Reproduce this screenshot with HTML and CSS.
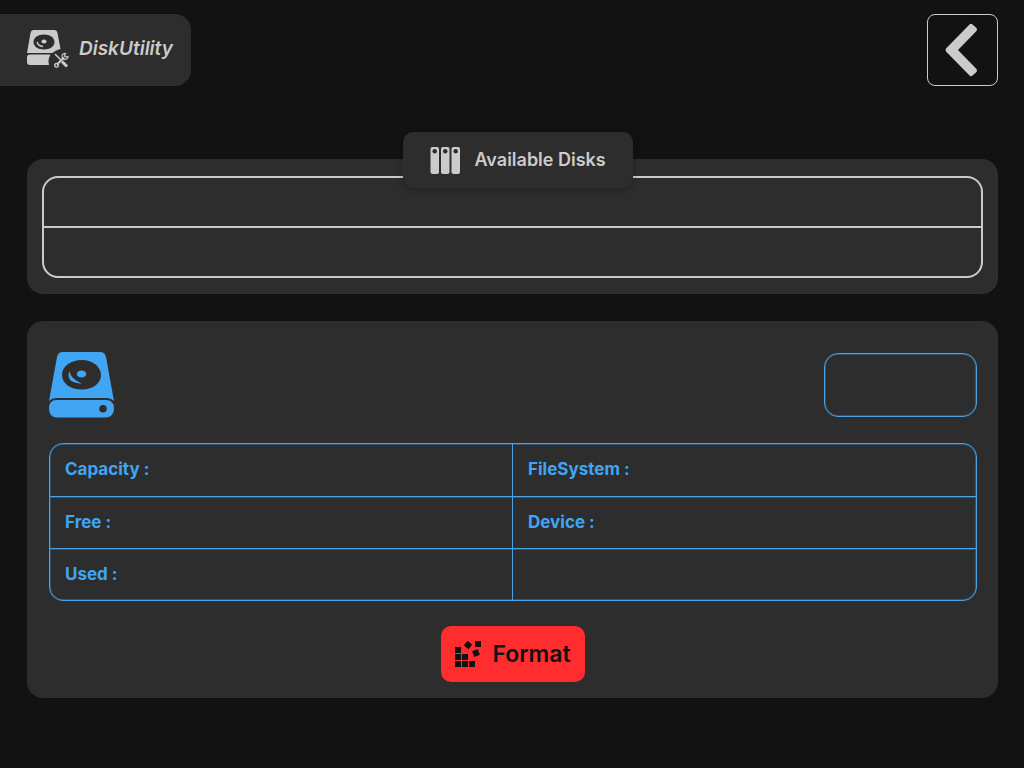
FILE: index.html
```html
<!DOCTYPE html>
<html lang="en">
<head>
<meta charset="utf-8">
<meta name="viewport" content="width=device-width, initial-scale=1">
<title>DiskUtility</title>
<link rel="stylesheet" href="styles.css">
</head>
<body>
<header class="topbar">
  <div class="brand">
    <svg class="brand-icon" viewBox="0 0 43 41" aria-hidden="true">
      <path fill="currentColor" fill-rule="evenodd" d="M8 1h20q3 0 3.500 3l3 16q-5 1-8 4H1L4.500 4Q5 1 8 1zM18 5.500c-6 0-10.500 3-10.500 7.500S12 20.500 18 20.500s10.500-3 10.500-7.500S24 5.500 18 5.500z"/>
      <ellipse cx="18" cy="12.600" rx="2.600" ry="2" fill="currentColor"/>
      <path d="M11 13q1 4 6 4.500" fill="none" stroke="currentColor" stroke-width="1.300"/>
      <path fill="currentColor" d="M4 25.500h20.500q-3 5-1.500 10.500H4q-3 0-3-3v-4.500q0-3 3-3z"/>
      <g fill="none" stroke="currentColor">
        <path d="M29 25l6 6" stroke-width="1.500"/>
        <path d="M36 32.500l5 5" stroke-width="3"/>
        <path d="M31 35.500l7-7" stroke-width="2"/>
        <path d="M39.500 24.500a3 3 0 1 0 2.500 3l-2.500.700-1-1z" stroke-width="1.200"/>
        <circle cx="30.500" cy="36.300" r="1.800" stroke-width="1.400"/>
      </g>
    </svg>
    <h1 class="brand-name">DiskUtility</h1>
  </div>
  <button class="back" type="button" aria-label="Back">
    <svg class="back-icon" viewBox="0 0 34 54" aria-hidden="true">
      <path fill="currentColor" d="M24.500 1.500q1.500-1.500 3 0l4 3.500q1 1.500 0 3L13 27l18.500 19q1 1.500 0 3l-4 3.500q-1.500 1.500-3 0L1 28.500q-1-1.500 0-3z"/>
    </svg>
  </button>
</header>
<main class="content">
  <section class="panel disks">
    <h2 class="disks-title">
      <svg class="disks-icon" viewBox="0 0 30 28" aria-hidden="true">
        <g fill="currentColor"><rect x="0.500" y="1" width="8.500" height="27" rx="2"/><rect x="11" y="1" width="8.500" height="27" rx="2"/><rect x="21.500" y="1" width="8.500" height="27" rx="2"/></g>
        <g fill="#2d2d2d"><circle cx="4.700" cy="5.200" r="2.200"/><circle cx="15.200" cy="5.200" r="2.200"/><circle cx="25.700" cy="5.200" r="2.200"/></g>
      </svg>
      Available Disks
    </h2>
    <ul class="disk-list">
      <li class="disk-row"></li>
      <li class="disk-row"></li>
    </ul>
  </section>
  <section class="panel details">
    <div class="details-head">
      <svg class="drive-icon" viewBox="0 0 66 66" aria-hidden="true">
        <path fill="currentColor" fill-rule="evenodd" d="M14 0h37q5 0 6 5l8 44q-3-3-7-3H7q-4 0-7 3L8 5q1-5 6-5zM33 8C21.500 8 13 14.500 13 23s8.500 14.500 20 14.500S52 31 52 23 44 8 33 8z"/>
        <ellipse cx="32.500" cy="22" rx="4.800" ry="3.500" fill="currentColor"/>
        <path fill="currentColor" d="M20.500 19q1 8 12.500 12.500Q16 31 20.500 19z"/>
        <path fill="currentColor" fill-rule="evenodd" d="M8 48h49q8 0 8 8.500t-8 9H8q-8 0-8-9T8 48zm46 5a3.800 3.800 0 1 0 0 7.600 3.800 3.800 0 0 0 0-7.600z"/>
      </svg>
      <div class="status"></div>
    </div>
    <table class="facts">
      <tbody>
        <tr><th scope="row">Capacity :</th><td></td><th scope="row">FileSystem :</th><td></td></tr>
        <tr><th scope="row">Free :</th><td></td><th scope="row">Device :</th><td></td></tr>
        <tr><th scope="row">Used :</th><td></td><td></td><td></td></tr>
      </tbody>
    </table>
    <button class="format" type="button">
      <svg class="format-icon" viewBox="0 0 27 27" aria-hidden="true">
        <g fill="currentColor">
          <rect x="0" y="6" width="6" height="6"/>
          <rect x="0" y="13" width="6" height="6"/><rect x="7" y="13" width="6" height="6"/>
          <rect x="0" y="20" width="6" height="6"/><rect x="7" y="20" width="6" height="6"/><rect x="14" y="20" width="6" height="6"/>
          <rect x="20" y="0" width="6" height="6"/>
          <rect x="10" y="1" width="6" height="6" transform="rotate(40 13 4)"/>
          <rect x="18" y="9" width="6" height="6" transform="rotate(-22 21 12)"/>
        </g>
      </svg>
      Format
    </button>
  </section>
</main>
</body>
</html>
```
FILE: styles.css
```css
* { box-sizing: border-box; }

body {
  margin: 0;
  background: #121212;
  color: #cbcbcb;
  font-family: Inter, "Open Sans", sans-serif;
}

.topbar {
  display: flex;
  justify-content: space-between;
  padding: 14px 26px 0 0;
}

.brand {
  display: flex;
  align-items: center;
  gap: 10px;
  height: 72px;
  padding: 0 18px 2px 26px;
  background: #2d2d2d;
  border-radius: 0 16px 16px 0;
}

.brand-icon { width: 43px; height: 41px; }

.brand-name {
  margin: 0;
  font-size: 19px;
  line-height: 24px;
  font-weight: 600;
  font-style: italic;
}

.back {
  display: flex;
  align-items: center;
  justify-content: center;
  width: 71px;
  height: 72px;
  padding: 0 2px 0 0;
  color: inherit;
  background: transparent;
  border: 1px solid #cbcbcb;
  border-radius: 8px;
}

.back-icon { width: 34px; height: 54px; }

.content {
  display: flex;
  flex-direction: column;
  gap: 27px;
  padding: 73px 26px 27px 27px;
}

.panel {
  background: #2d2d2d;
  border-radius: 16px;
}

.disks {
  position: relative;
  padding: 17px 15px 16px;
}

.disks-title {
  position: absolute;
  top: -27px;
  left: calc(50% - 110px);
  display: flex;
  align-items: center;
  gap: 15px;
  height: 56px;
  margin: 0;
  padding: 0 27px;
  font-size: 18px;
  line-height: 24px;
  font-weight: 600;
  white-space: nowrap;
  background: #2d2d2d;
  border-radius: 10px;
  box-shadow: 0 2px 6px rgba(0, 0, 0, 0.25);
}

.disks-icon { width: 30px; height: 28px; }

.disk-list {
  margin: 0;
  padding: 0;
  list-style: none;
  border: 2px solid #cbcbcb;
  border-radius: 16px;
}

.disk-row { height: 50px; }
.disk-row:first-child { height: 48px; }
.disk-row + .disk-row { border-top: 2px solid #cbcbcb; }

.details {
  display: flex;
  flex-direction: column;
  padding: 31px 21px 16px 22px;
  color: #40a5f3;
}

.details-head {
  display: flex;
  align-items: center;
  justify-content: space-between;
}

.drive-icon { width: 66px; height: 66px; }

.status {
  width: 153px;
  height: 64px;
  border: 1px solid #4aa3e6;
  border-radius: 14px;
  box-shadow: inset 0 0 0 1px #2a5578;
}

.facts {
  width: 100%;
  margin: 25px 0;
  table-layout: fixed;
  border: 1px solid #4aa3e6;
  border-radius: 14px;
  border-spacing: 0;
  box-shadow: inset 0 0 0 1px #2a5578;
}

.facts th,
.facts td {
  height: 52px;
  padding: 0 0 2px 15px;
  font-size: 17px;
  line-height: 24px;
  font-weight: 700;
  text-align: left;
  white-space: nowrap;
}

.facts tr + tr > * {
  border-top: 1px solid #4aa3e6;
  box-shadow: inset 0 1px #2a5578;
}

.facts tr > :nth-child(2) { border-right: 1px solid #4aa3e6; }

.format {
  display: flex;
  align-items: center;
  align-self: center;
  gap: 10px;
  height: 56px;
  padding: 0 14px;
  color: #121212;
  font: 600 23px/28px Inter, "Open Sans", sans-serif;
  background: #ff2d2d;
  border: 0;
  border-radius: 10px;
}

.format-icon { width: 27px; height: 27px; }
```
